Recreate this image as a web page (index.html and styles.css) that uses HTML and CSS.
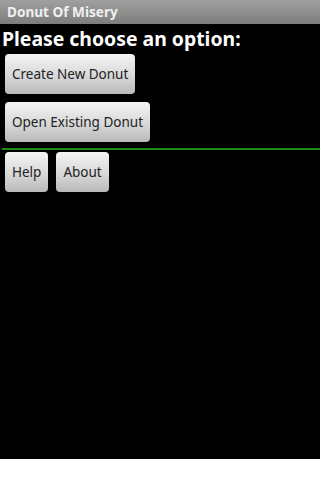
FILE: index.html
```html
<!DOCTYPE html>
<html>
<head>
<meta charset="utf-8">
<link rel="stylesheet" href="styles.css">
</head>
<body>
<div class="screen">
  <div class="titlebar">Donut Of Misery</div>
  <div class="content">
    <div class="heading">Please choose an option:</div>
    <div class="stack">
      <button class="btn">Create New Donut</button>
      <button class="btn">Open Existing Donut</button>
    </div>
    <div class="divider"></div>
    <div class="row">
      <button class="btn">Help</button>
      <button class="btn">About</button>
    </div>
  </div>
</div>
</body>
</html>
```
FILE: styles.css
```css
html, body {
  margin: 0;
  padding: 0;
  background: #ffffff;
}
.screen {
  width: 320px;
  height: 459px;
  background: #000000;
  font-family: "Noto Sans", "Open Sans", sans-serif;
  overflow: hidden;
}
.titlebar {
  height: 24px;
  box-sizing: border-box;
  padding-left: 7px;
  background: linear-gradient(#a0a0a0, #7c7c7c);
  color: #f0f0f0;
  font-weight: bold;
  font-size: 13.6px;
  line-height: 23px;
}
.content {
  display: flex;
  flex-direction: column;
}
.heading {
  color: #ffffff;
  font-weight: bold;
  font-size: 19.4px;
  line-height: 30px;
  padding-left: 2px;
  height: 30px;
}
.stack {
  display: flex;
  flex-direction: column;
  align-items: flex-start;
  gap: 8px;
  padding-left: 5px;
}
.btn {
  height: 40px;
  box-sizing: border-box;
  padding: 0 7px;
  border: none;
  border-radius: 4px;
  background: linear-gradient(#f4f4f4, #d8d8d8 55%, #b9b9b9);
  color: #222222;
  font-family: "Noto Sans", "Open Sans", sans-serif;
  font-size: 13.5px;
  cursor: pointer;
}
.divider {
  height: 2px;
  margin: 6px 0 2px 2px;
  background: #1c8a1c;
}
.row {
  display: flex;
  gap: 8px;
  padding-left: 5px;
}
```
